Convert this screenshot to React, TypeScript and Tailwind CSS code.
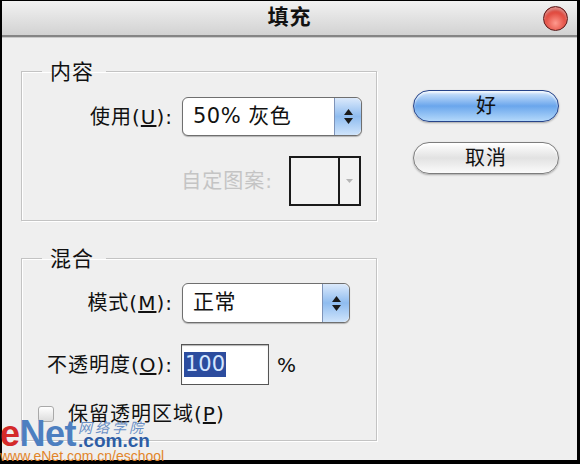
import React from "react";

const font = { fontFamily: '"DejaVu Sans", "Noto Sans CJK SC", sans-serif' };

function Stepper() {
  return (
    <div className="flex h-full w-[27px] flex-col items-center justify-center gap-[3px] rounded-r-[6px] border-l border-[#7e93b8] bg-gradient-to-b from-[#dbe9fb] via-[#8fbcef] to-[#cfe4fb]">
      <svg width="9" height="6" viewBox="0 0 9 6"><path d="M4.5 0 L9 6 L0 6 Z" fill="#1a1a1a" /></svg>
      <svg width="9" height="6" viewBox="0 0 9 6"><path d="M0 0 L9 0 L4.5 6 Z" fill="#1a1a1a" /></svg>
    </div>
  );
}

function Select({ value, w, h }: { value: string; w: string; h: string }) {
  return (
    <div className={`flex ${w} ${h} items-stretch overflow-hidden rounded-[6px] border border-[#6f6f6f] bg-white shadow-[0_1px_1px_rgba(0,0,0,0.25)]`}>
      <div className="flex flex-1 items-center pl-[10px] text-[21px] tracking-[0.5px] text-[#111]">{value}</div>
      <Stepper />
    </div>
  );
}

export default function App() {
  return (
    <div className="h-[464px] w-[580px] bg-black pb-[4px] pl-[2px] pr-[3px] pt-[1px]" style={font}>
      <div className="relative flex h-full flex-col bg-[#efefef]">
        {/* title bar */}
        <div className="grid h-[36px] grid-cols-[1fr_auto_1fr] items-center border-b-[2px] border-[#858585] bg-gradient-to-b from-[#f2f2f2] to-[#d2d2d2] shadow-[0_1px_0_#c9c9c9]">
          <div />
          <div className="text-[21px] font-bold tracking-[1px] text-[#111]">填充</div>
          <div className="flex justify-end pr-[9px]">
            <div className="h-[25px] w-[25px] rounded-full border border-[#5a1a1a] bg-[radial-gradient(circle_at_50%_70%,#ff9a8e,#e0473c_55%,#9e1510)] shadow-[inset_0_3px_3px_rgba(255,255,255,0.45)]" />
          </div>
        </div>

        {/* body */}
        <div className="flex flex-1 pl-[19px] pt-[22px]">
          <div className="flex w-[356px] flex-col gap-[25px]">
            {/* 内容 */}
            <fieldset className="border border-[#c3c3c3] pb-[14px] shadow-[inset_1px_1px_0_#fff,1px_1px_0_#fff]">
              <legend className="ml-[20px] pl-[8px] pr-[12px] pt-[3px] text-[21px] leading-[21px] tracking-[1px] text-[#111]">内容</legend>
              <div className="flex flex-col gap-[20px] pt-[14px]">
                <div className="flex items-center">
                  <div className="w-[151px] text-right text-[20px] tracking-[1px] text-[#111]">
                    使用(<span className="underline underline-offset-1">U</span>):
                  </div>
                  <div className="ml-[9px]">
                    <Select value="50% 灰色" w="w-[180px]" h="h-[39px]" />
                  </div>
                </div>
                <div className="flex items-center justify-end pr-[15px]">
                  <div className="text-[20px] tracking-[1px] text-[#c4c4c4]">自定图案:</div>
                  <div className="ml-[16px] flex h-[50px] w-[72px] border-2 border-[#1a1a1a] bg-[#f2f2f2]">
                    <div className="flex-1 border-r-2 border-[#1a1a1a]" />
                    <div className="flex w-[19px] items-center justify-center">
                      <svg width="7" height="4" viewBox="0 0 7 4"><path d="M0 0 L7 0 L3.5 4 Z" fill="#b5b5b5" /></svg>
                    </div>
                  </div>
                </div>
              </div>
            </fieldset>

            {/* 混合 */}
            <fieldset className="border border-[#c3c3c3] pb-[15px] shadow-[inset_1px_1px_0_#fff,1px_1px_0_#fff]">
              <legend className="ml-[20px] pl-[8px] pr-[12px] pt-[3px] text-[21px] leading-[21px] tracking-[1px] text-[#111]">混合</legend>
              <div className="flex flex-col pt-[13px]">
                <div className="flex items-center">
                  <div className="w-[151px] text-right text-[20px] tracking-[1px] text-[#111]">
                    模式(<span className="underline underline-offset-1">M</span>):
                  </div>
                  <div className="ml-[9px]">
                    <Select value="正常" w="w-[168px]" h="h-[40px]" />
                  </div>
                </div>
                <div className="mt-[21px] flex items-center">
                  <div className="w-[151px] whitespace-nowrap text-right text-[20px] tracking-[1px] text-[#111]">
                    不透明度(<span className="underline underline-offset-1">O</span>):
                  </div>
                  <div className="ml-[8px] flex h-[41px] w-[88px] items-center border border-[#555] bg-white pl-[2px] shadow-[inset_0_1px_1px_rgba(0,0,0,0.3)]">
                    <span className="bg-[#2c4c9e] px-[1px] text-[21px] leading-[25px] text-[#d5e6ff]">100</span>
                  </div>
                  <div className="ml-[8px] text-[20px] text-[#111]">%</div>
                </div>
                <div className="mt-[18px] flex h-[22px] items-center pl-[16px]">
                  <div className="h-[16px] w-[16px] rounded-[3px] border border-[#a9a9a9] bg-gradient-to-b from-white to-[#dcdcdc]" />
                  <div className="ml-[14px] text-[20px] leading-[20px] tracking-[1px] text-[#111]">
                    保留透明区域(<span className="underline underline-offset-1">P</span>)
                  </div>
                </div>
              </div>
            </fieldset>
          </div>

          {/* buttons */}
          <div className="ml-[36px] flex flex-col gap-[20px] pt-[31px]">
            <button className="flex h-[32px] w-[146px] items-center justify-center rounded-full border border-[#27448a] bg-gradient-to-b from-[#d6e8fb] via-[#6aa6ec] to-[#b3d8fa] text-[20px] text-[#111] shadow-[inset_0_2px_2px_rgba(255,255,255,0.7),0_1px_2px_rgba(0,0,0,0.3)]">
              好
            </button>
            <button className="flex h-[32px] w-[146px] items-center justify-center rounded-full border border-[#7d7d7d] bg-gradient-to-b from-[#ffffff] via-[#e2e2e2] to-[#fbfbfb] text-[20px] tracking-[1px] text-[#111] shadow-[inset_0_2px_2px_rgba(255,255,255,0.9),0_1px_2px_rgba(0,0,0,0.3)]">
              取消
            </button>
          </div>
        </div>

        {/* watermark */}
        <div className="absolute bottom-[-3px] left-[-2px] flex flex-col">
          <div className="flex items-end">
            <div className="flex items-end" style={{ fontFamily: '"Liberation Sans", sans-serif' }}>
              <span className="text-[36px] font-bold leading-[26px] tracking-[-0.5px] text-[#d42a2a]">e</span>
              <span className="text-[36px] font-bold leading-[26px] tracking-[-0.5px] text-[#4d7fc0]">Net</span>
            </div>
            <div className="ml-[2px] flex flex-col">
              <span className="text-[14px] leading-[13px] italic tracking-[3px] text-[#6a8fc6]" style={{ fontFamily: '"Noto Sans CJK SC", serif' }}>网络学院</span>
              <span className="text-[19px] font-bold leading-[13px] text-[#2d5da5]" style={{ fontFamily: '"Liberation Sans", sans-serif' }}>.com.cn</span>
            </div>
          </div>
          <span className="mt-[2px] text-[14px] leading-[14px] text-[#e2852a]" style={{ fontFamily: '"Liberation Sans", sans-serif' }}>www.eNet.com.cn/eschool</span>
        </div>
      </div>
    </div>
  );
}
